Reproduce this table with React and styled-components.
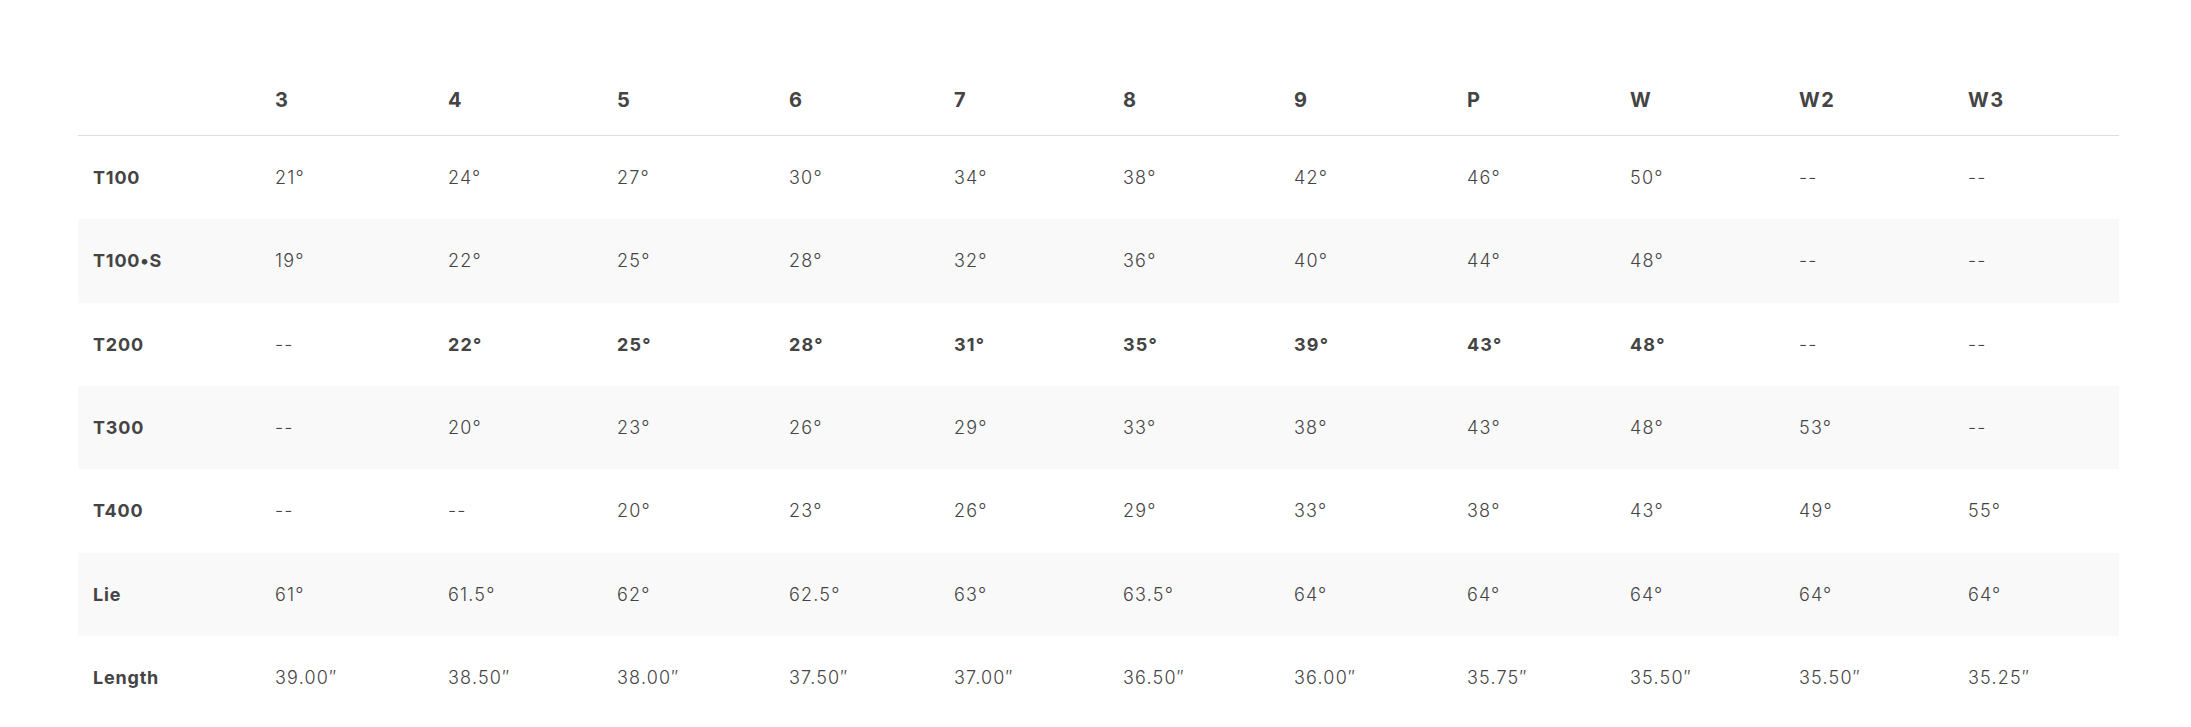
import React from "react";
import styled, { createGlobalStyle } from "styled-components";

const GlobalStyle = createGlobalStyle`
  html, body {
    margin: 0;
    padding: 0;
    background: #ffffff;
  }
  body {
    font-family: Inter, "Noto Sans", sans-serif;
    color: #444;
  }
`;

const columns = ["3", "4", "5", "6", "7", "8", "9", "P", "W", "W2", "W3"];

const rows = [
  { label: "T100", values: ["21°", "24°", "27°", "30°", "34°", "38°", "42°", "46°", "50°", "--", "--"] },
  { label: "T100•S", values: ["19°", "22°", "25°", "28°", "32°", "36°", "40°", "44°", "48°", "--", "--"] },
  {
    label: "T200",
    values: ["--", "22°", "25°", "28°", "31°", "35°", "39°", "43°", "48°", "--", "--"],
    strong: true,
  },
  { label: "T300", values: ["--", "20°", "23°", "26°", "29°", "33°", "38°", "43°", "48°", "53°", "--"] },
  { label: "T400", values: ["--", "--", "20°", "23°", "26°", "29°", "33°", "38°", "43°", "49°", "55°"] },
  { label: "Lie", values: ["61°", "61.5°", "62°", "62.5°", "63°", "63.5°", "64°", "64°", "64°", "64°", "64°"] },
  {
    label: "Length",
    values: ["39.00″", "38.50″", "38.00″", "37.50″", "37.00″", "36.50″", "36.00″", "35.75″", "35.50″", "35.50″", "35.25″"],
  },
];

export default function App() {
  return (
    <>
      <GlobalStyle />
      <Wrapper>
        <Table>
          <HeadRow>
            <HeadCell />
            {columns.map((c) => (
              <HeadCell key={c}>{c}</HeadCell>
            ))}
          </HeadRow>
          {rows.map((row, i) => (
            <Row key={row.label} $striped={i % 2 === 1}>
              <LabelCell>{row.label}</LabelCell>
              {row.values.map((v, j) => (
                <Cell key={j} $strong={row.strong && v !== "--"}>
                  {v}
                </Cell>
              ))}
            </Row>
          ))}
        </Table>
      </Wrapper>
    </>
  );
}

const Wrapper = styled.div`
  padding: 64px 72px 0 78px;
`;

const Table = styled.div`
  width: 2041px;
  display: flex;
  flex-direction: column;
`;

// column widths follow the auto table layout of the original
const gridCols = `182px 173px 169px 172px 165px 169px 171px 173px 163px 169px 169px 1fr`;

const HeadRow = styled.div`
  display: grid;
  grid-template-columns: ${gridCols};
  align-items: center;
  height: 71px;
  border-bottom: 1px solid #dedede;
`;

const HeadCell = styled.div`
  padding-left: 15px;
  font-size: 20px;
  font-weight: 700;
  letter-spacing: 1.5px;
  color: #444;
`;

const Row = styled.div`
  display: grid;
  grid-template-columns: ${gridCols};
  align-items: center;
  height: 83.33px;
  background: ${(p) => (p.$striped ? "#f9f9f9" : "#ffffff")};
`;

const LabelCell = styled.div`
  padding-left: 15px;
  font-size: 18px;
  font-weight: 700;
  letter-spacing: 0.8px;
  color: #444;
`;

const Cell = styled.div`
  padding-left: 15px;
  font-size: 18px;
  font-weight: ${(p) => (p.$strong ? 700 : 300)};
  letter-spacing: 1.2px;
  color: #444;
`;
